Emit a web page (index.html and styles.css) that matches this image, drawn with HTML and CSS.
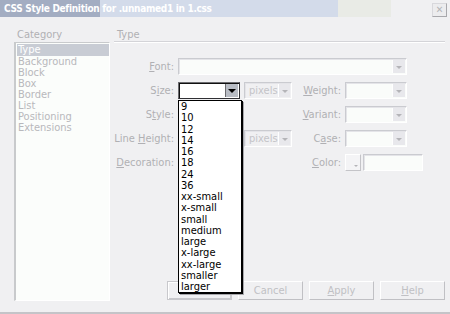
FILE: index.html
```html
<!DOCTYPE html>
<html lang="en">
<head>
  <meta charset="UTF-8" />
  <title>CSS Style Definition</title>
  <link rel="stylesheet" href="styles.css">
</head>
<body>
  <div class="window">
    <div class="titlebar">
      <span class="title">CSS Style Definition for .unnamed1 in 1.css</span>
      <span class="close-btn">&#x2715;</span>
    </div>

    <div class="main">
      <div class="category">
        <div class="caption">Category</div>
        <ul class="listbox">
          <li class="selected">Type</li>
          <li>Background</li>
          <li>Block</li>
          <li>Box</li>
          <li>Border</li>
          <li>List</li>
          <li>Positioning</li>
          <li>Extensions</li>
        </ul>
      </div>

      <div class="panel">
        <div class="panel-title">Type</div>

        <div class="form">
          <div class="row">
            <label class="lbl"><u>F</u>ont:</label>
            <div class="combo wide"><span class="arrow"></span></div>
          </div>

          <div class="row">
            <label class="lbl">S<u>i</u>ze:</label>
            <div class="combo size active"><span class="arrow"></span></div>
            <div class="combo unit"><span class="val">pixels</span><span class="arrow"></span></div>
            <label class="lbl2"><u>W</u>eight:</label>
            <div class="combo short"><span class="arrow"></span></div>
          </div>

          <div class="row">
            <label class="lbl">S<u>t</u>yle:</label>
            <div class="combo size"><span class="arrow"></span></div>
            <div class="spacer"></div>
            <label class="lbl2"><u>V</u>ariant:</label>
            <div class="combo short"><span class="arrow"></span></div>
          </div>

          <div class="row">
            <label class="lbl">Line <u>H</u>eight:</label>
            <div class="combo size"><span class="arrow"></span></div>
            <div class="combo unit"><span class="val">pixels</span><span class="arrow"></span></div>
            <label class="lbl2">C<u>a</u>se:</label>
            <div class="combo short"><span class="arrow"></span></div>
          </div>

          <div class="row">
            <label class="lbl"><u>D</u>ecoration:</label>
            <div class="size-gap"></div>
            <label class="lbl2"><u>C</u>olor:</label>
            <div class="swatch"><span class="swatch-arrow"></span></div>
            <div class="field color"></div>
          </div>
        </div>

        <div class="buttons">
          <button>OK</button>
          <button>Cancel</button>
          <button><u>A</u>pply</button>
          <button><u>H</u>elp</button>
        </div>

        <ul class="dropdown">
          <li>9</li>
          <li>10</li>
          <li>12</li>
          <li>14</li>
          <li>16</li>
          <li>18</li>
          <li>24</li>
          <li>36</li>
          <li>xx-small</li>
          <li>x-small</li>
          <li>small</li>
          <li>medium</li>
          <li>large</li>
          <li>x-large</li>
          <li>xx-large</li>
          <li>smaller</li>
          <li>larger</li>
        </ul>
      </div>
    </div>
  </div>
</body>
</html>
```

FILE: styles.css
```css
body {
  margin: 0;
  background-color: #f0f0f2;
  font-family: "DejaVu Sans Condensed", "Liberation Sans Narrow", "Liberation Sans", sans-serif;
  font-size: 11px;
  color: #b0b0b4;
}

.window {
  width: 450px;
  height: 314px;
  box-sizing: border-box;
  border-bottom: 2px solid #c4c4c8;
  position: relative;
}

.titlebar {
  height: 17px;
  display: flex;
  align-items: center;
  background: linear-gradient(to right, #a3adc2 0, #a3adc2 100px, #d3dbea 100px, #d3dbea 338px, #e9ebe6 338px, #e9ebe6 391px, transparent 391px);
}

.title {
  color: #ffffff;
  font-weight: bold;
  font-size: 10px;
  padding-left: 4px;
  letter-spacing: -0.3px;
}

.close-btn {
  margin-left: auto;
  margin-right: 3px;
  margin-top: 3px;
  width: 13px;
  height: 12px;
  border: 1px solid #d8d8dc;
  border-right-color: #a8a8ac;
  border-bottom-color: #a8a8ac;
  background: #ececee;
  color: #b4b4b8;
  font-size: 10px;
  line-height: 12px;
  text-align: center;
}

.main {
  display: flex;
  padding: 11px 0 0 14px;
}

.category {
  width: 96px;
}

.caption {
  height: 13px;
  line-height: 13px;
  padding-left: 3px;
  margin-bottom: 1px;
}

.listbox {
  list-style: none;
  margin: 0;
  padding: 1px 0 0 1px;
  height: 259px;
  box-sizing: border-box;
  background: #fbfdfb;
  border-left: 2px solid #c8cacc;
  border-top: 1px solid #c8cacc;
  border-right: 1px solid #ffffff;
  border-bottom: 1px solid #ffffff;
  color: #b8b8bc;
}

.listbox li {
  height: 11px;
  line-height: 11px;
  padding-left: 1px;
}

.listbox li.selected {
  background: #c8ccd4;
  color: #ffffff;
  height: 12px;
}

.panel {
  width: 331px;
  margin-left: 4px;
  height: 273px;
  display: flex;
  flex-direction: column;
  position: relative;
}

.panel-title {
  height: 13px;
  line-height: 13px;
  padding-left: 3px;
  border-bottom: 1px solid #d4d4d8;
  box-shadow: 0 1px 0 #ffffff;
}

.form {
  margin-top: 16px;
  display: flex;
  flex-direction: column;
  gap: 7px;
}

.row {
  display: flex;
  align-items: center;
  height: 17px;
}

.lbl {
  width: 60px;
  text-align: right;
  margin-right: 4px;
  white-space: nowrap;
}

.lbl2 {
  width: 49px;
  text-align: right;
  margin-right: 4px;
  white-space: nowrap;
}

.combo {
  height: 17px;
  box-sizing: border-box;
  background: #fafcfa;
  border: 1px solid #cacbd0;
  border-right-color: #ffffff;
  border-bottom-color: #ffffff;
  box-shadow: inset 1px 1px 0 #e4e4e8;
  display: flex;
  align-items: center;
  justify-content: flex-end;
  padding: 1px;
}

.combo .val {
  margin-right: auto;
  padding-left: 3px;
  color: #c4c4c8;
}

.arrow {
  width: 12px;
  height: 13px;
  background: #e8e8ec;
  border-left: 1px solid #ffffff;
  position: relative;
}

.arrow::after {
  content: "";
  position: absolute;
  left: 3px;
  top: 6px;
  border-left: 3px solid transparent;
  border-right: 3px solid transparent;
  border-top: 3px solid #b4b4b8;
}

.wide {
  width: 229px;
}

.size {
  width: 62px;
}

.size-gap {
  width: 114px;
}

.spacer {
  width: 52px;
}

.unit {
  width: 48px;
  margin-left: 4px;
  background: #f0f0f2;
}

.short {
  width: 62px;
}

.combo.active {
  border: 1px solid #6c6c70;
  border-right-color: #303034;
  border-bottom-color: #303034;
  box-shadow: inset 1px 1px 0 #101010;
  background: #ffffff;
}

.combo.active .arrow {
  background: #b8bcc4;
  border-left: 1px solid #6c6c70;
}

.combo.active .arrow::after {
  border-top: 4px solid #000000;
  top: 5px;
  border-left-width: 4px;
  border-right-width: 4px;
  left: 2px;
}

.swatch {
  width: 16px;
  height: 17px;
  box-sizing: border-box;
  border: 1px solid #ffffff;
  border-right-color: #c4c4c8;
  border-bottom-color: #c4c4c8;
  background: #f4f4f6;
  position: relative;
}

.swatch-arrow {
  position: absolute;
  right: 2px;
  bottom: 3px;
  border-left: 2px solid transparent;
  border-right: 2px solid transparent;
  border-top: 2px solid #b4b4b8;
}

.field {
  height: 17px;
  box-sizing: border-box;
  background: #fafcfa;
  border: 1px solid #cacbd0;
  border-right-color: #ffffff;
  border-bottom-color: #ffffff;
  box-shadow: inset 1px 1px 0 #e4e4e8;
}

.color {
  width: 60px;
  margin-left: 2px;
}

.buttons {
  margin-top: auto;
  margin-bottom: 1px;
  display: flex;
  justify-content: flex-end;
  gap: 6px;
}

.buttons button {
  width: 65px;
  height: 19px;
  box-sizing: border-box;
  font-family: inherit;
  font-size: 11px;
  color: #c0c0c4;
  background: #f0f0f2;
  border: 1px solid #ffffff;
  border-right-color: #c0c0c4;
  border-bottom-color: #c0c0c4;
  padding: 0;
}

.buttons button:first-child {
  border: 1px solid #c8c8cc;
  box-shadow: inset 1px 1px 0 #ffffff, inset -1px -1px 0 #c8c8cc;
}

.dropdown {
  position: absolute;
  left: 64px;
  top: 72px;
  width: 62px;
  margin: 0;
  padding: 0;
  list-style: none;
  background: #ffffff;
  border: 1px solid #000000;
  box-shadow: 1px 1px 0 #000000, 2px 2px 0 #a8a8ac;
  color: #000000;
  font-size: 11px;
}

.dropdown li {
  height: 11.25px;
  line-height: 11.25px;
  padding-left: 2px;
  white-space: nowrap;
}
```
